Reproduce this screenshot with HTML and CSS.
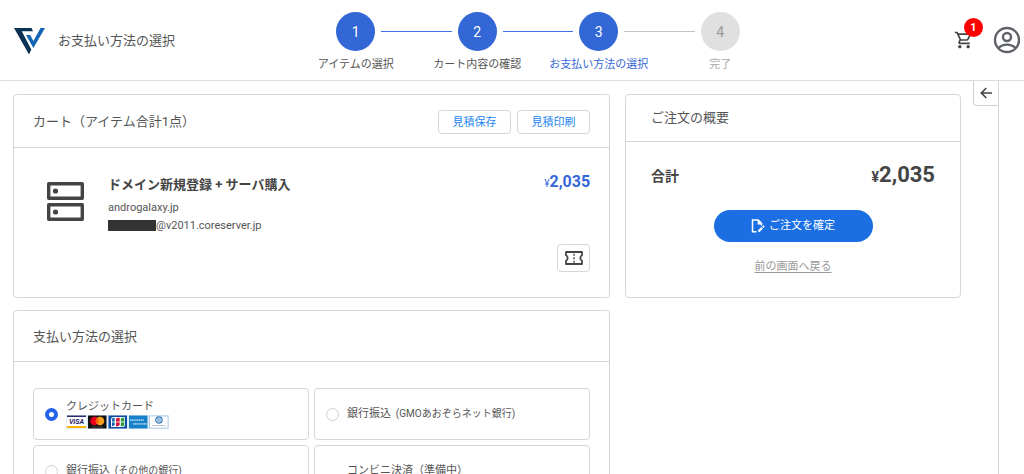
FILE: index.html
```html
<!DOCTYPE html>
<html lang="ja">
<head>
<meta charset="utf-8">
<meta name="viewport" content="width=device-width, initial-scale=1">
<title>お支払い方法の選択</title>
<link rel="stylesheet" href="styles.css">
</head>
<body>
<header class="topbar">
  <div class="brand">
    <svg class="brand-logo" viewBox="0 0 31 27" aria-hidden="true">
      <path fill="#0b3154" d="M0 0h17.500l1.500 3.200H7.800L17.300 21.500l-2.300 5z"/>
      <path fill="#1463b4" d="M12 7h4.200l3.200 6L26.500 0H31L19.400 20z"/>
    </svg>
    <h1 class="brand-title">お支払い方法の選択</h1>
  </div>
  <ol class="steps">
    <li class="step"><span class="step-num">1</span><span class="step-label">アイテムの選択</span></li>
    <li class="step"><span class="step-num">2</span><span class="step-label">カート内容の確認</span></li>
    <li class="step step-current" aria-current="step"><span class="step-num">3</span><span class="step-label">お支払い方法の選択</span></li>
    <li class="step step-todo"><span class="step-num">4</span><span class="step-label">完了</span></li>
  </ol>
  <div class="tools">
    <button class="tool cart-tool" type="button" aria-label="カート">
      <svg width="20" height="20" viewBox="0 0 24 24" fill="#444" aria-hidden="true"><path d="M15.550 13c.75 0 1.410-.41 1.750-1.030l3.580-6.490A.996.996 0 0 0 20.010 4H5.210l-.94-2H1v2h2l3.600 7.590-1.350 2.440C4.520 15.370 5.480 17 7 17h12v-2H7l1.100-2h7.450zM6.160 6h12.150l-2.760 5H8.530L6.160 6zM7 18c-1.100 0-1.990.9-1.990 2S5.900 22 7 22s2-.9 2-2-.9-2-2-2zm10 0c-1.100 0-1.990.9-1.990 2s.89 2 1.990 2 2-.9 2-2-.9-2-2-2z"/></svg>
      <span class="badge">1</span>
    </button>
    <button class="tool" type="button" aria-label="アカウント">
      <svg width="28" height="28" viewBox="0 0 28 28" fill="none" stroke="#5f6368" stroke-width="2.400" aria-hidden="true"><circle cx="14" cy="14" r="12"/><circle cx="14" cy="11" r="4"/><path d="M5.500 22c4.500-4.500 12.500-4.500 17 0"/></svg>
    </button>
  </div>
</header>

<div class="page">
  <main class="content">
    <div class="column">
      <section class="card">
        <div class="card-head">
          <h2 class="card-title">カート（アイテム合計1点）</h2>
          <div class="actions">
            <button class="outline-btn" type="button">見積保存</button>
            <button class="outline-btn" type="button">見積印刷</button>
          </div>
        </div>
        <div class="item">
          <svg class="item-icon" viewBox="0 0 37 40" fill="none" stroke="#444" stroke-width="3.400" stroke-linejoin="round" aria-hidden="true"><rect x="1.700" y="1.700" width="33.600" height="14.600"/><rect x="1.700" y="22.700" width="33.600" height="14.600"/><g fill="#444" stroke="none"><circle cx="8.500" cy="9" r="2.600"/><circle cx="8.500" cy="30" r="2.600"/></g></svg>
          <div class="item-info">
            <h3 class="item-name">ドメイン新規登録 + サーバ購入</h3>
            <p class="item-line">androgalaxy.jp</p>
            <p class="item-line"><span class="masked"></span>@v2011.coreserver.jp</p>
          </div>
          <div class="item-side">
            <p class="price"><span class="yen">¥</span>2,035</p>
            <button class="coupon-btn" type="button" aria-label="クーポン">
              <svg width="18" height="14" viewBox="0 0 18 14" fill="none" stroke="#444" aria-hidden="true"><path stroke-width="1.800" stroke-linejoin="round" d="M1 1h16v3.300a3 3 0 0 0 0 5.400V13H1V9.700a3 3 0 0 0 0-5.400z"/><path stroke-width="1.400" stroke-dasharray="2 1.500" d="M9 2.800v9"/></svg>
            </button>
          </div>
        </div>
      </section>

      <section class="card">
        <div class="card-head pay-head">
          <h2 class="card-title">支払い方法の選択</h2>
        </div>
        <div class="options">
          <label class="option">
            <input class="radio" type="radio" name="pay" checked>
            <span class="option-text">クレジットカード
              <svg class="brands" viewBox="0 0 103 14" aria-hidden="true">
                <rect width="103" height="14" fill="#e3edf9"/>
                <rect x="1" y="1" width="19" height="12" fill="#fff"/><rect x="1" y="0.500" width="19" height="1.500" fill="#2a2a6c"/><rect x="1" y="11" width="19" height="2" fill="#f7b600"/>
                <text x="10.500" y="9.300" class="visa">VISA</text>
                <rect x="22" y="0.500" width="18.500" height="13" fill="#111"/><circle cx="28.500" cy="6" r="4.300" fill="#eb001b"/><circle cx="34" cy="6" r="4.300" fill="#f79e1b"/><path fill="#ff5f00" d="M31.250 2.700a4.300 4.300 0 0 1 0 6.600a4.300 4.300 0 0 1 0-6.600z"/><path stroke="#777" stroke-width=".8" stroke-dasharray="1 .5" d="M26 12h11"/>
                <rect x="42.500" y="0.500" width="18.500" height="13" fill="#0b4da2"/><path fill="#fff" d="M47.500 2H59v7.500q0 2.500-2.500 2.500H45V4.500Q45 2 47.500 2z"/><path fill="#1766b3" d="M47.500 2.800h1.200v6.700q0 1.800-2.700 1.800V4.500q0-1.700 1.500-1.700z"/><path fill="#d9143a" d="M51.500 2.800h2.200v6.700q0 1.800-3.700 1.800V4.500q0-1.700 1.500-1.700z"/><path fill="#2a9c3c" d="M56 2.800h2.300v6.700q0 1.800-3.500 1.800V4.500q0-1.700 1.200-1.700z"/><path stroke="#fff" stroke-width=".8" d="M46 7h12"/>
                <rect x="63" y="0.500" width="18.500" height="13" fill="#1681c8"/><path stroke="#9ed0ef" stroke-width="1.800" stroke-dasharray="1.300 .5" d="M64 5.200h14M67 8.800h14"/>
                <rect x="83.500" y="1" width="18.500" height="12" fill="#fff" stroke="#86b3dc" stroke-width=".6"/><circle cx="93" cy="5" r="3.200" fill="#fff" stroke="#397fbd" stroke-width="1.200"/><path stroke="#397fbd" d="M92 2.800v4.400M94 2.800v4.400"/><path stroke="#999" stroke-width=".9" stroke-dasharray="1 .4" d="M86.500 10.500h13"/>
              </svg>
            </span>
          </label>
          <label class="option">
            <input class="radio" type="radio" name="pay">
            <span class="option-text">銀行振込 <small class="note">(GMOあおぞらネット銀行)</small></span>
          </label>
          <label class="option">
            <input class="radio" type="radio" name="pay">
            <span class="option-text">銀行振込 <small class="note">(その他の銀行)</small></span>
          </label>
          <div class="option option-off">
            <span class="option-text">コンビニ決済（準備中）</span>
          </div>
        </div>
      </section>
    </div>

    <aside class="card">
      <div class="card-head sum-head">
        <h2 class="card-title">ご注文の概要</h2>
      </div>
      <div class="sum-body">
        <div class="total">
          <span class="total-label">合計</span>
          <span class="total-price"><span class="total-yen">¥</span>2,035</span>
        </div>
        <button class="confirm" type="button">
          <svg width="14" height="14" viewBox="0 0 14 14" fill="none" stroke="#fff" stroke-width="1.500" aria-hidden="true"><path d="M5.500 12.800H1.500V1h5.700L10.500 4.300V6.500"/><path fill="#fff" stroke="none" d="M6.700 1l4.300 4.500H6.700z"/><path stroke-width="2.200" d="M7.500 12.500l3.600-3.600M11.800 8.200l1.200-1.200"/></svg>
          ご注文を確定
        </button>
        <a class="back" href="#">前の画面へ戻る</a>
      </div>
    </aside>
  </main>
  <button class="rail-toggle" type="button" aria-label="パネルを開く">
    <svg width="12" height="12" viewBox="0 0 12 12" fill="none" stroke="#444" stroke-width="1.600" aria-hidden="true"><path d="M12 6H1.500M6.300 1L1.300 6l5 5"/></svg>
  </button>
  <div class="rail"></div>
</div>
</body>
</html>
```
FILE: styles.css
```css
* {
  box-sizing: border-box;
}

html {
  height: 100%;
}

body {
  margin: 0;
  height: 100%;
  display: flex;
  flex-direction: column;
  overflow: hidden;
  background: #fff;
  color: #555;
  font: 11px/18px Roboto, "Noto Sans CJK JP", sans-serif;
}

h1, h2, h3, p, ol {
  margin: 0;
  padding: 0;
  font-weight: 400;
}

button {
  font: inherit;
  color: inherit;
  background: #fff;
  border: 0;
  padding: 0;
  cursor: pointer;
}

svg {
  display: block;
}

.topbar {
  display: grid;
  grid-template-columns: 295fr 486fr 243fr;
  flex: none;
  border-bottom: 1px solid #ddd;
}

.brand {
  display: flex;
  align-items: center;
  gap: 13px;
  padding: 2px 0 0 14px;
}

.brand-logo {
  width: 31px;
  height: 27px;
}

.brand-title, .card-title {
  font-size: 13px;
  line-height: 20px;
}

.steps {
  display: flex;
  list-style: none;
  padding: 12px 0 6px;
}

.step {
  flex: 1 1 0;
  display: grid;
  grid-template-columns: 1fr 39px 1fr;
  align-items: center;
  row-gap: 5px;
}

.step::before, .step::after {
  content: "";
  grid-row: 1;
  height: 1px;
  background: #3f74e4;
}

.step::before {
  grid-column: 1;
  margin-right: 6px;
}

.step::after {
  grid-column: 3;
  margin-left: 6px;
}

.step:first-child::before, .step:last-child::after {
  visibility: hidden;
}

.step-current::after, .step-todo::before {
  background: #c4c4c4;
}

.step-num {
  grid-column: 2;
  grid-row: 1;
  height: 39px;
  border-radius: 50%;
  background: #3367d6;
  color: #fff;
  font-size: 14px;
  line-height: 40px;
  text-align: center;
}

.step-label {
  grid-column: 1 / 4;
  text-align: center;
}

.step-current .step-label {
  color: #3367d6;
}

.step-todo .step-num {
  background: #e0e0e0;
  color: #999;
}

.step-todo .step-label {
  color: #aaa;
}

.tools {
  display: flex;
  justify-content: flex-end;
  align-items: center;
  gap: 19px;
  padding-right: 3px;
}

.cart-tool {
  position: relative;
}

.badge {
  position: absolute;
  top: -12px;
  right: -9px;
  width: 19px;
  border-radius: 50%;
  background: #f00;
  color: #fff;
  font-weight: 700;
  line-height: 19px;
}

.page {
  display: flex;
  flex: 1 0 auto;
}

.content {
  flex: 1;
  display: grid;
  grid-template-columns: 16fr 9fr;
  align-items: start;
  gap: 15px;
  padding: 13px 12px 13px 13px;
}

.column {
  display: grid;
  gap: 12px;
}

.card {
  border: 1px solid #d6d6d6;
  border-radius: 4px;
}

.card-head {
  display: flex;
  justify-content: space-between;
  align-items: center;
  padding: 15px 19px 13px;
  border-bottom: 1px solid #d6d6d6;
}

.actions {
  display: flex;
  gap: 6px;
}

.outline-btn {
  width: 73px;
  height: 24px;
  padding-top: 2px;
  border: 1px solid #d6d6d6;
  border-radius: 4px;
  color: #1a85f0;
}

.item {
  display: flex;
  gap: 24px;
  padding: 25px 19px;
}

.item-icon {
  flex: none;
  width: 37px;
  height: 40px;
  margin-top: 9px;
}

.item-info {
  flex: 1;
  padding-top: 1px;
}

.item-name {
  padding-bottom: 3px;
  color: #444;
  font-size: 13px;
  font-weight: 700;
  line-height: 22px;
}

.item {
  padding-left: 33px;
}

.masked {
  display: inline-block;
  width: 48px;
  height: 11px;
  background: #333;
  vertical-align: -2px;
}

.item-side {
  display: flex;
  flex-direction: column;
  align-items: flex-end;
  justify-content: space-between;
  min-height: 99px;
}

.price {
  color: #3367d6;
  font-size: 16px;
  font-weight: 700;
}

.yen {
  font-size: 10px;
  font-weight: 400;
}

.coupon-btn {
  display: grid;
  place-items: center;
  width: 33px;
  height: 28px;
  border: 1px solid #d6d6d6;
  border-radius: 4px;
}

.pay-head {
  padding: 16px 19px 14px;
}

.options {
  display: grid;
  grid-template-columns: 1fr 1fr;
  gap: 5px;
  padding: 26px 19px;
}

.option {
  display: flex;
  align-items: center;
  gap: 8px;
  min-height: 52px;
  padding: 0 11px;
  border: 1px solid #d6d6d6;
  border-radius: 4px;
}

.option-off {
  padding-left: 32px;
}

.option-text {
  line-height: 16px;
}

.radio {
  appearance: none;
  flex: none;
  width: 13px;
  height: 13px;
  margin: 0;
  border: 1px solid #d0d0d0;
  border-radius: 50%;
}

.radio:checked {
  border: 4px solid #2563eb;
}

.note {
  margin-left: 2px;
  font-size: 10px;
}

.brands {
  width: 103px;
  height: 14px;
}

.visa {
  fill: #2a2a6c;
  font-size: 7px;
  font-style: italic;
  font-weight: 700;
  text-anchor: middle;
}

.sum-head {
  padding: 13px 25px;
}

.sum-body {
  display: flex;
  flex-direction: column;
  align-items: center;
  padding: 20px 25px 21px;
}

.total {
  display: flex;
  align-self: stretch;
  justify-content: space-between;
  align-items: center;
  color: #444;
  font-weight: 700;
  line-height: 26px;
}

.total-label {
  font-size: 14px;
}

.total-price {
  font-size: 22px;
}

.total-yen {
  font-size: 14px;
}

.confirm {
  display: flex;
  align-items: center;
  justify-content: center;
  gap: 4px;
  width: 159px;
  height: 32px;
  margin: 20px 0 16px;
  border-radius: 16px;
  background: #1b6fe3;
  color: #fff;
}

.back {
  color: #999;
  text-underline-offset: 2px;
}

.rail-toggle {
  display: grid;
  place-items: center;
  width: 25px;
  height: 25px;
  border: 1px solid #d0d0d0;
  border-width: 0 0 1px 1px;
  border-radius: 0 0 0 4px;
}

.rail {
  width: 26px;
  border-left: 1px solid #d6d6d6;
}
```
